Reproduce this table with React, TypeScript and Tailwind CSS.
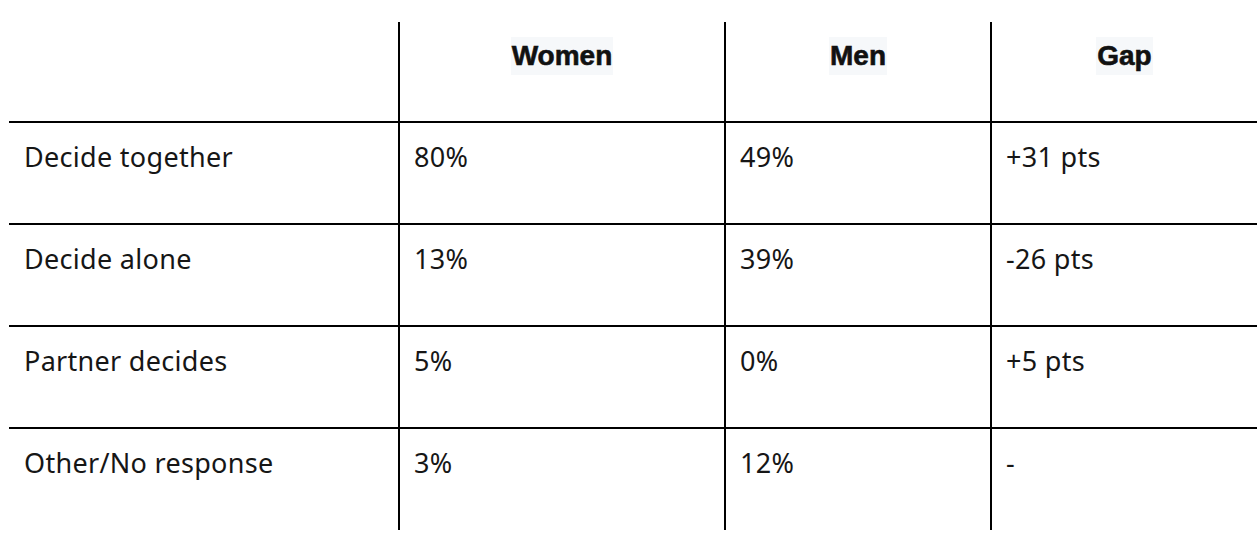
const rows = [
  ["Decide together", "80%", "49%", "+31 pts"],
  ["Decide alone", "13%", "39%", "-26 pts"],
  ["Partner decides", "5%", "0%", "+5 pts"],
  ["Other/No response", "3%", "12%", "-"],
];

const headers = ["Women", "Men", "Gap"];

export default function App() {
  return (
    <div className="w-[1258px] h-[534px] bg-white pt-[22px] pl-[9px] overflow-hidden">
      <div
        className="grid grid-cols-[389px_326px_266px_267px] text-[#161616]"
        style={{ fontFamily: '"Noto Sans", "Open Sans", sans-serif' }}
      >
        {/* header */}
        <div className="h-[99px]" />
        {headers.map((h) => (
          <div key={h} className="h-[99px] border-l-2 border-black pt-[15px] text-center">
            <span
              className="inline-block bg-[#f6f8fa] px-px py-[3px] text-[28px] font-bold leading-[32px] text-[#111] [-webkit-text-stroke:0.6px_#111]"
              style={{ fontFamily: '"Liberation Sans", Arial, sans-serif' }}
            >
              {h}
            </span>
          </div>
        ))}

        {/* body */}
        {rows.map((r, ri) =>
          r.map((c, i) => (
            <div
              key={r[0] + i}
              className={
                (ri === rows.length - 1 ? "h-[103px] " : "h-[102px] ") +
                "border-t-2 border-black pt-[14px] text-[27px] leading-[39px] tracking-[0.3px] " +
                (i === 0 ? "pl-[15px]" : "border-l-2 pl-[14px]")
              }
            >
              {c}
            </div>
          ))
        )}
      </div>
    </div>
  );
}
